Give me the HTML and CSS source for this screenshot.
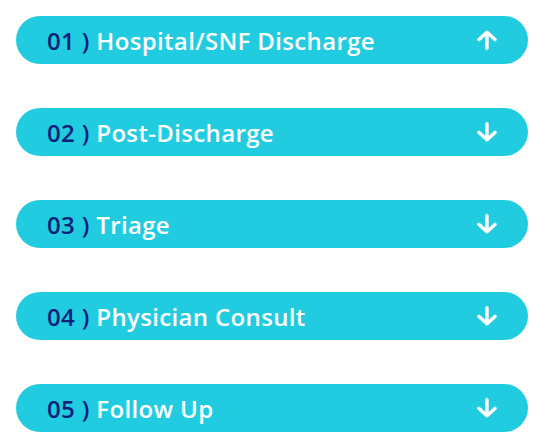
FILE: index.html
```html
<!DOCTYPE html>
<html lang="en">
<head>
<meta charset="utf-8">
<title>Steps</title>
<link rel="stylesheet" href="styles.css">
</head>
<body>
<div class="accordion">
  <button class="step">
    <span class="label"><span class="num">01 )</span> Hospital/SNF Discharge</span>
    <svg class="arrow" viewBox="0 0 20 20" width="20" height="20"><path d="M10 18.2V2.2M2 9.6L10 2.2l8 7.4" /></svg>
  </button>
  <button class="step">
    <span class="label"><span class="num">02 )</span> Post-Discharge</span>
    <svg class="arrow" viewBox="0 0 20 20" width="20" height="20"><path d="M10 1.8V17.8M2 10.4L10 17.8l8-7.4" /></svg>
  </button>
  <button class="step">
    <span class="label"><span class="num">03 )</span> Triage</span>
    <svg class="arrow" viewBox="0 0 20 20" width="20" height="20"><path d="M10 1.8V17.8M2 10.4L10 17.8l8-7.4" /></svg>
  </button>
  <button class="step">
    <span class="label"><span class="num">04 )</span> Physician Consult</span>
    <svg class="arrow" viewBox="0 0 20 20" width="20" height="20"><path d="M10 1.8V17.8M2 10.4L10 17.8l8-7.4" /></svg>
  </button>
  <button class="step">
    <span class="label"><span class="num">05 )</span> Follow Up</span>
    <svg class="arrow" viewBox="0 0 20 20" width="20" height="20"><path d="M10 1.8V17.8M2 10.4L10 17.8l8-7.4" /></svg>
  </button>
</div>
</body>
</html>
```
FILE: styles.css
```css
html, body {
  margin: 0;
  padding: 0;
  background: #ffffff;
}
body {
  padding: 16px;
  font-family: "Open Sans", "Lato", sans-serif;
}
.accordion {
  display: flex;
  flex-direction: column;
  gap: 44px;
  width: 512px;
}
.step {
  display: flex;
  align-items: center;
  justify-content: space-between;
  height: 48px;
  margin: 0;
  border: 0;
  border-radius: 24px;
  background: #22cce0;
  padding: 0 31px 0 31px;
  font-family: inherit;
  cursor: pointer;
  text-align: left;
}
.label {
  font-size: 24px;
  font-weight: 600;
  letter-spacing: 0.35px;
  color: #ffffff;
  white-space: pre;
}
.num {
  color: #0c2179;
}
.arrow {
  fill: none;
  stroke: #ffffff;
  stroke-width: 3.4;
  stroke-linecap: round;
  stroke-linejoin: round;
  flex: none;
}
```
